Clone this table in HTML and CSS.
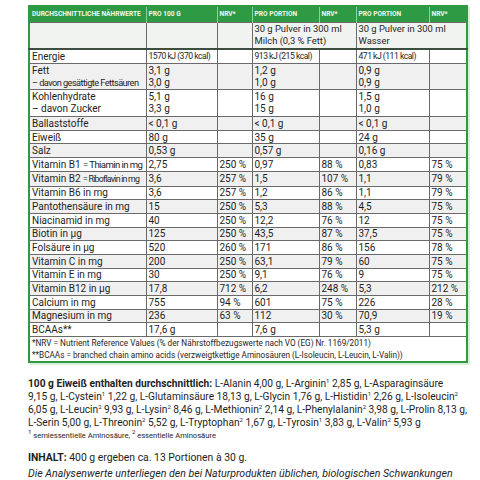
FILE: index.html
```html
<!DOCTYPE html>
<html lang="de">
<head>
<meta charset="utf-8">
<link rel="stylesheet" href="styles.css">
</head>
<body>
<div class="page">
  <table class="nt">
    <colgroup>
      <col class="c1"><col class="c2"><col class="c3"><col class="c4"><col class="c5"><col class="c6"><col class="c7">
    </colgroup>
    <thead>
      <tr class="hd">
        <th>DURCHSCHNITTLICHE NÄHRWERTE</th><th>PRO 100 G</th><th>NRV*</th><th>PRO PORTION</th><th>NRV*</th><th>PRO PORTION</th><th>NRV*</th>
      </tr>
      <tr class="sub">
        <td></td><td></td><td></td><td colspan="2">30 g Pulver in 300 ml<br>Milch (0,3 % Fett)</td><td colspan="2">30 g Pulver in 300 ml<br>Wasser</td>
      </tr>
    </thead>
    <tbody>
      <tr><td>Energie</td><td class="en">1570 kJ (370 kcal)</td><td></td><td class="en">913 kJ (215 kcal)</td><td></td><td class="en">471 kJ (111 kcal)</td><td></td></tr>
      <tr class="g d"><td>Fett<br><span class="cx">– davon gesättigte Fettsäuren</span></td><td>3,1 g<br>3,0 g</td><td></td><td>1,2 g<br>1,0 g</td><td></td><td>0,9 g<br>0,9 g</td><td></td></tr>
      <tr class="d"><td>Kohlenhydrate<br>– davon Zucker</td><td>5,1 g<br>3,3 g</td><td></td><td>16 g<br>15 g</td><td></td><td>1,5 g<br>1,0 g</td><td></td></tr>
      <tr class="g"><td>Ballaststoffe</td><td>&lt; 0,1 g</td><td></td><td>&lt; 0,1 g</td><td></td><td>&lt; 0,1 g</td><td></td></tr>
      <tr><td>Eiweiß</td><td>80 g</td><td></td><td>35 g</td><td></td><td>24 g</td><td></td></tr>
      <tr class="g"><td>Salz</td><td>0,53 g</td><td></td><td>0,57 g</td><td></td><td>0,16 g</td><td></td></tr>
      <tr><td>Vitamin B1 <span class="cn">= Thiamin in mg</span></td><td>2,75</td><td>250 %</td><td>0,97</td><td>88 %</td><td>0,83</td><td>75 %</td></tr>
      <tr class="g"><td>Vitamin B2 <span class="cn2">= Riboflavin in mg</span></td><td>3,6</td><td>257 %</td><td>1,5</td><td>107 %</td><td>1,1</td><td>79 %</td></tr>
      <tr><td>Vitamin B6 in mg</td><td>3,6</td><td>257 %</td><td>1,2</td><td>86 %</td><td>1,1</td><td>79 %</td></tr>
      <tr class="g"><td>Pantothensäure in mg</td><td>15</td><td>250 %</td><td>5,3</td><td>88 %</td><td>4,5</td><td>75 %</td></tr>
      <tr><td>Niacinamid in mg</td><td>40</td><td>250 %</td><td>12,2</td><td>76 %</td><td>12</td><td>75 %</td></tr>
      <tr class="g"><td>Biotin in µg</td><td>125</td><td>250 %</td><td>43,5</td><td>87 %</td><td>37,5</td><td>75 %</td></tr>
      <tr><td>Folsäure in µg</td><td>520</td><td>260 %</td><td>171</td><td>86 %</td><td>156</td><td>78 %</td></tr>
      <tr class="g"><td>Vitamin C in mg</td><td>200</td><td>250 %</td><td>63,1</td><td>79 %</td><td>60</td><td>75 %</td></tr>
      <tr><td>Vitamin E in mg</td><td>30</td><td>250 %</td><td>9,1</td><td>76 %</td><td>9</td><td>75 %</td></tr>
      <tr class="g"><td>Vitamin B12 in µg</td><td>17,8</td><td>712 %</td><td>6,2</td><td>248 %</td><td>5,3</td><td>212 %</td></tr>
      <tr><td>Calcium in mg</td><td>755</td><td>94 %</td><td>601</td><td>75 %</td><td>226</td><td>28 %</td></tr>
      <tr class="g"><td>Magnesium in mg</td><td>236</td><td>63 %</td><td>112</td><td>30 %</td><td>70,9</td><td>19 %</td></tr>
      <tr><td>BCAAs**</td><td>17,6 g</td><td></td><td>7,6 g</td><td></td><td>5,3 g</td><td></td></tr>
      <tr class="fn"><td colspan="7">*NRV = Nutrient Reference Values (% der Nährstoffbezugswerte nach VO (EG) Nr. 1169/2011)<br>**BCAAs = branched chain amino acids (verzweigtkettige Aminosäuren (L-Isoleucin, L-Leucin, L-Valin))</td></tr>
    </tbody>
  </table>

  <p class="amino"><b>100 g Eiweiß enthalten durchschnittlich:</b> L-Alanin 4,00 g, L-Arginin<sup>1</sup> 2,85 g, L-Asparaginsäure<br>9,15 g, L-Cystein<sup>1</sup> 1,22 g, L-Glutaminsäure 18,13 g, L-Glycin 1,76 g, L-Histidin<sup>1</sup> 2,26 g, L-Isoleucin<sup>2</sup><br>6,05 g, L-Leucin<sup>2</sup> 9,93 g, L-Lysin<sup>2</sup> 8,46 g, L-Methionin<sup>2</sup> 2,14 g, L-Phenylalanin<sup>2</sup> 3,98 g, L-Prolin 8,13 g,<br>L-Serin 5,00 g, L-Threonin<sup>2</sup> 5,52 g, L-Tryptophan<sup>2</sup> 1,67 g, L-Tyrosin<sup>1</sup> 3,83 g, L-Valin<sup>2</sup> 5,93 g</p>
  <p class="small"><sup>1</sup> semiessentielle Aminosäure, <sup>2</sup> essentielle Aminosäure</p>
  <p class="inhalt"><b>INHALT:</b> 400 g ergeben ca. 13 Portionen à 30 g.</p>
  <p class="note">Die Analysenwerte unterliegen den bei Naturprodukten üblichen, biologischen Schwankungen</p>
</div>
</body>
</html>
```
FILE: styles.css
```css
html, body {
  margin: 0;
  padding: 0;
  background: #ffffff;
}
body {
  font-family: Roboto, "Noto Sans", sans-serif;
  color: #1e1e1e;
}
.page {
  padding: 5px 0 0 28px;
  width: 440px;
}
.nt {
  border-collapse: collapse;
  table-layout: fixed;
  width: 438px;
  border: 2px solid #2f9a44;
  box-shadow: 2px 2px 0 #d6f0da;
  font-size: 10px;
}
.c1 { width: 117px; }
.c2 { width: 71px; }
.c3 { width: 35px; }
.c4 { width: 67px; }
.c5 { width: 37px; }
.c6 { width: 73px; }
.c7 { width: 38px; }
.nt td, .nt th {
  border: 1px solid #6a6a6a;
  padding: 0.8px 2px;
  line-height: 11.1px;
  vertical-align: top;
  text-align: left;
  white-space: nowrap;
  overflow: hidden;
}
.nt .d td { line-height: 12px; }
.hd th {
  background: #2f9a44;
  color: #eef8ee;
  font-size: 6.6px;
  font-weight: 700;
  height: 13px;
  vertical-align: middle;
  border-color: #8fcf9a;
  border-top: 0;
  border-bottom: 0;
}
.sub td {
  background: #f1f3f1;
  height: 24px;
  font-size: 9.4px;
  line-height: 12px;
  border-bottom: 2px solid #3d4d40;
}
.g td { background: #f0f0f0; }
.cn { letter-spacing: -0.6px; font-size: 9.6px; }
.cn2 { letter-spacing: -0.75px; font-size: 8.8px; }
.cx { letter-spacing: -0.55px; font-size: 9.2px; }
.nt td.en { font-size: 8.6px; letter-spacing: -0.5px; }
.nt .fn td {
  font-size: 8.2px;
  line-height: 12px;
  padding: 0 2px;
  background: #fff;
}
.amino {
  margin: 14px 0 0 0;
  font-size: 10.2px;
  line-height: 13px;
  white-space: nowrap;
}
sup {
  font-size: 6px;
  vertical-align: 4px;
  line-height: 0;
}
.small {
  margin: 2px 0 0 0;
  font-size: 7.6px;
  line-height: 10px;
}
.inhalt {
  margin: 10px 0 0 0;
  font-size: 10.4px;
  line-height: 14px;
}
.note {
  margin: 2px 0 0 0;
  font-size: 10.6px;
  line-height: 14px;
  font-style: italic;
}
```
